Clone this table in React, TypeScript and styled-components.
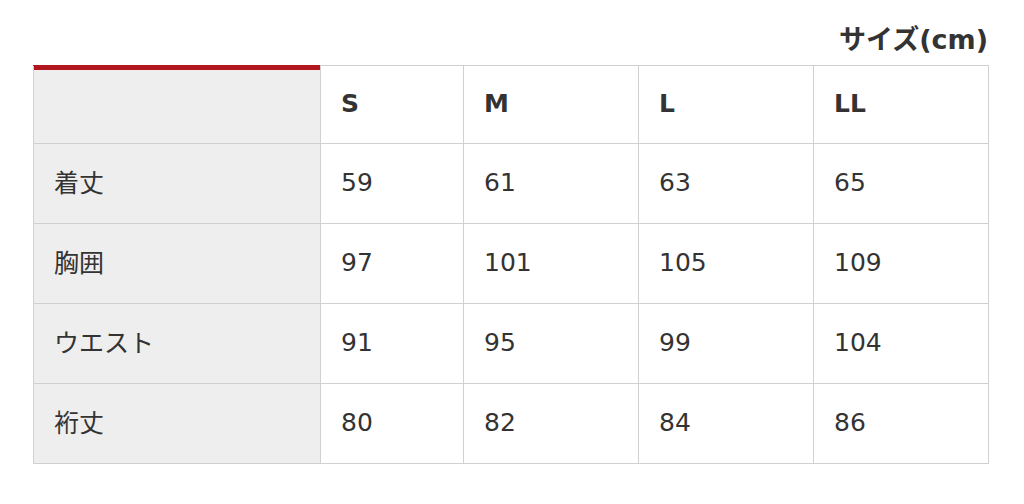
import React from 'react';
import styled, { createGlobalStyle } from 'styled-components';

const GlobalStyle = createGlobalStyle`
  html, body {
    margin: 0;
    padding: 0;
    background: #fff;
  }
  body {
    font-family: "DejaVu Sans", "Noto Sans CJK JP", sans-serif;
    color: #333;
  }
`;

const Wrapper = styled.div`
  width: 955px;
  margin-left: 33px;
  padding-top: 23px;
`;

const Caption = styled.div`
  text-align: right;
  font-size: 27px;
  line-height: 34px;
  font-weight: bold;
  color: #333;
  margin-bottom: 8px;
`;

const SizeTable = styled.table`
  width: 955px;
  border-collapse: collapse;
  table-layout: fixed;
`;

const Col = styled.col<{ $wide?: boolean; $narrow?: boolean }>`
  width: ${(p) => (p.$wide ? '287px' : p.$narrow ? '143px' : '175px')};
`;

const HeadRow = styled.tr`
  height: 78px;
`;

const BodyRow = styled.tr`
  height: 80px;
`;

const Cell = styled.td<{ $label?: boolean; $accent?: boolean }>`
  border: 1px solid #d0d0d0;
  padding: 0 0 ${(p) => (p.$label ? '6px' : '2px')} 20px;
  text-align: left;
  vertical-align: middle;
  font-size: 25px;
  font-weight: normal;
  color: #333;
  background: ${(p) => (p.$label ? '#eeeeee' : '#fff')};
  ${(p) =>
    p.$accent &&
    `
    border-top-color: #b2171f;
    box-shadow: inset 0 4px 0 #b2171f;
  `}
`;

const HeadCell = styled(Cell).attrs({ as: 'th' })`
  font-weight: bold;
  padding-bottom: 2px;
`;

const sizes = ['S', 'M', 'L', 'LL'];

const rows: { label: string; values: number[] }[] = [
  { label: '着丈', values: [59, 61, 63, 65] },
  { label: '胸囲', values: [97, 101, 105, 109] },
  { label: 'ウエスト', values: [91, 95, 99, 104] },
  { label: '裄丈', values: [80, 82, 84, 86] },
];

export default function App() {
  return (
    <>
      <GlobalStyle />
      <Wrapper>
        <Caption>サイズ(cm)</Caption>
        <SizeTable>
          <colgroup>
            <Col $wide />
            <Col $narrow />
            <Col />
            <Col />
            <Col />
          </colgroup>
          <thead>
            <HeadRow>
              <HeadCell $label $accent />
              {sizes.map((s) => (
                <HeadCell key={s}>{s}</HeadCell>
              ))}
            </HeadRow>
          </thead>
          <tbody>
            {rows.map((r) => (
              <BodyRow key={r.label}>
                <Cell $label>{r.label}</Cell>
                {r.values.map((v, i) => (
                  <Cell key={i}>{v}</Cell>
                ))}
              </BodyRow>
            ))}
          </tbody>
        </SizeTable>
      </Wrapper>
    </>
  );
}
